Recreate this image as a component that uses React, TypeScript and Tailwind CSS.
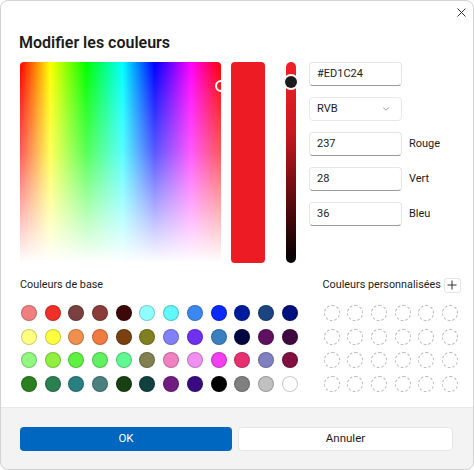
import React from 'react';
import { ChevronDown } from 'lucide-react';

const baseColors: string[][] = [
  ['#f08080', '#f03028', '#7a4040', '#8c3c38', '#3c0808', '#90ffff', '#60f8f8', '#3a88f0', '#0a2af8', '#001c9c', '#1a4580', '#00107c'],
  ['#ffff80', '#ffff40', '#f0904e', '#f07a40', '#7a4010', '#808020', '#8080f8', '#7030f0', '#3880c0', '#000840', '#601060', '#400a40'],
  ['#90f880', '#90f040', '#60f040', '#60f060', '#60f890', '#808050', '#f080c0', '#f090f0', '#f040f0', '#e83070', '#8080c0', '#801040'],
  ['#2a8020', '#2a8050', '#2a8080', '#4a8080', '#184010', '#104040', '#701c80', '#380c80', '#000000', '#808080', '#c0c0c0', '#ffffff'],
];

const fields = [
  { value: '237', label: 'Rouge' },
  { value: '28', label: 'Vert' },
  { value: '36', label: 'Bleu' },
];

const TextBox: React.FC<{ value: string }> = ({ value }) => (
  <div className="h-[24px] w-[93px] rounded-[4px] border border-[#e5e5e5] border-b-[#9a9a9a] bg-white px-[7px] flex items-center text-[11px] text-[#1b1b1b]">
    {value}
  </div>
);

const App: React.FC = () => {
  return (
    <div
      className="w-[474px] h-[470px] flex flex-col bg-white rounded-[8px] overflow-hidden outline outline-1 -outline-offset-1 outline-[#d2d2d2] text-[#1b1b1b]"
      style={{ fontFamily: 'Roboto, "Noto Sans", sans-serif' }}
    >
      {/* title bar */}
      <div className="h-[24px] flex items-center justify-end pr-[8px]">
        <svg width="9" height="9" viewBox="0 0 9 9" className="text-[#333]">
          <path d="M0.5 0.5L8.5 8.5M8.5 0.5L0.5 8.5" stroke="currentColor" strokeWidth="1" />
        </svg>
      </div>

      <h1 className="mt-[9px] px-[19px] text-[16px] leading-[20px] font-semibold">Modifier les couleurs</h1>

      {/* picker */}
      <div className="mt-[9px] flex h-[201px] pl-[20px]">
        <div className="relative w-[201px] h-[201px] rounded-[4px] overflow-hidden bg-[image:linear-gradient(to_bottom,rgba(255,255,255,0)_0%,rgba(255,255,255,0.35)_45%,#fff_100%),linear-gradient(to_right,#f00_0%,#ff0_15%,#0f0_33%,#0ff_51%,#00f_67%,#f0f_85%,#f00_100%)]">
          <div className="absolute left-[195px] top-[18px] w-[12px] h-[12px] rounded-full border-2 border-white" />
        </div>

        <div className="ml-[10px] w-[34px] h-full rounded-[4px] bg-[#ED1C24]" />

        <div className="relative ml-[21px] w-[10px] h-full rounded-full bg-[image:linear-gradient(to_bottom,#f22028_0%,#c81820_35%,#5a0a0e_70%,#000_100%)]">
          <div className="absolute left-[-1px] top-[14px] w-[12px] h-[12px] rounded-full bg-[#1c1c1c] ring-2 ring-white" />
        </div>

        <div className="ml-[13px] flex flex-col gap-[11px]">
          <TextBox value="#ED1C24" />
          <div className="h-[24px] w-[93px] rounded-[4px] border border-[#e8e8e8] bg-white pl-[7px] pr-[10px] flex items-center justify-between text-[11px]">
            <span>RVB</span>
            <ChevronDown size={10} strokeWidth={1.5} className="text-[#606060]" />
          </div>
          {fields.map((f) => (
            <div key={f.label} className="flex items-center gap-[7px]">
              <TextBox value={f.value} />
              <span className="text-[11px]">{f.label}</span>
            </div>
          ))}
        </div>
      </div>

      {/* swatches */}
      <div className="mt-[14px] flex pl-[20px] gap-[25px]">
        <div className="flex flex-col">
          <div className="h-[16px] flex items-center text-[10.8px]">Couleurs de base</div>
          <div className="mt-[12px] ml-[1px] grid grid-cols-[repeat(12,16px)] gap-[7.7px]">
            {baseColors.flat().map((c, i) => (
              <div key={i} className="w-[16px] h-[16px] rounded-full border border-black/20" style={{ backgroundColor: c }} />
            ))}
          </div>
        </div>
        <div className="flex flex-col">
          <div className="h-[16px] flex items-center gap-[3px] text-[10.8px]">
            <span>Couleurs personnalisées</span>
            <div className="w-[17px] h-[15px] rounded-[3px] border border-[#e5e5e5] bg-white flex items-center justify-center">
              <svg width="10" height="10" viewBox="0 0 10 10">
                <path d="M5 0.5V9.5M0.5 5H9.5" stroke="#333" strokeWidth="1" />
              </svg>
            </div>
          </div>
          <div className="mt-[12px] ml-[1px] grid grid-cols-[repeat(6,16px)] gap-[7.7px]">
            {Array.from({ length: 24 }).map((_, i) => (
              <div key={i} className="w-[16px] h-[16px] rounded-full border border-dashed border-[#b4b4b4]" />
            ))}
          </div>
        </div>
      </div>

      {/* footer */}
      <div className="mt-auto h-[63px] bg-[#f3f3f3] border-t border-[#e8e8e8] pl-[20px] pr-[21px] flex items-center gap-[6px]">
        <button className="h-[24px] w-[212px] rounded-[4px] bg-[#0067c0] text-white text-[11.5px]">OK</button>
        <button className="h-[24px] flex-1 rounded-[4px] bg-white border border-[#e5e5e5] text-[11.5px] text-[#1b1b1b]">Annuler</button>
      </div>
    </div>
  );
};

export default App;
